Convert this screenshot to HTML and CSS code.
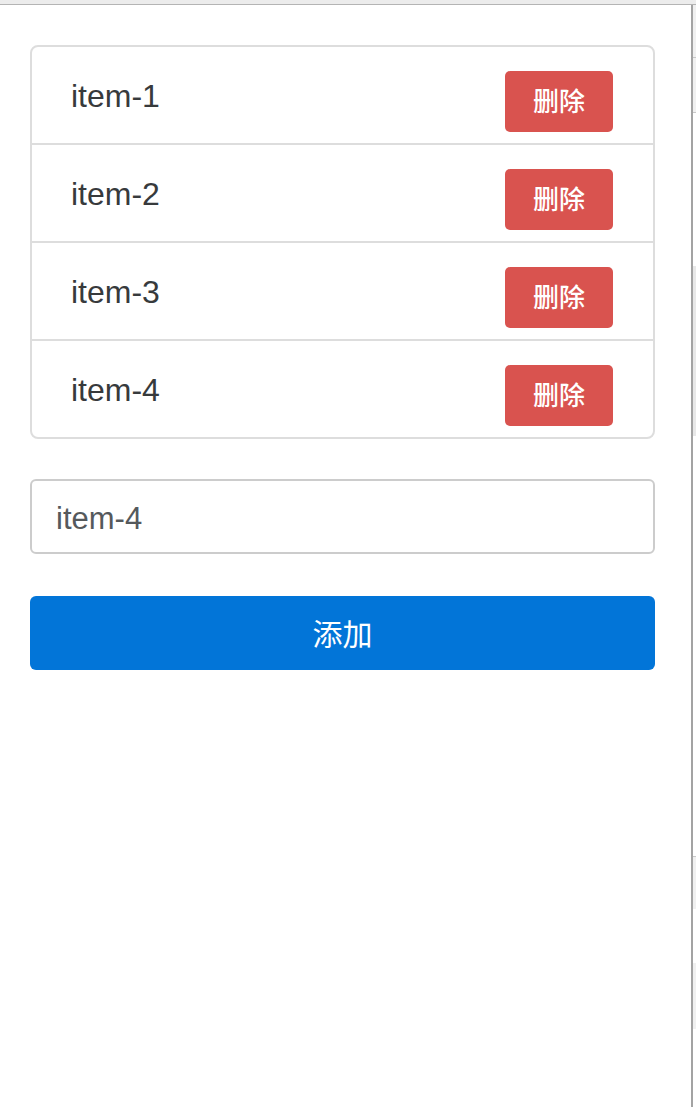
FILE: index.html
```html
<!DOCTYPE html>
<html lang="zh">
<head>
<meta charset="utf-8">
<title>List</title>
<link rel="stylesheet" href="styles.css">
</head>
<body>
<div class="chrome-top"></div>
<div class="frame">
  <main class="page">
    <ul class="list">
      <li class="row"><span class="label">item-1</span><button class="del">删除</button></li>
      <li class="row"><span class="label">item-2</span><button class="del">删除</button></li>
      <li class="row"><span class="label">item-3</span><button class="del">删除</button></li>
      <li class="row"><span class="label">item-4</span><button class="del">删除</button></li>
    </ul>
    <input class="field" type="text" value="item-4">
    <button class="add">添加</button>
  </main>
  <div class="gutter-line"></div>
  <div class="gutter">
    <div class="seg light s1"></div>
    <div class="seg mark"></div>
    <div class="seg light s2"></div>
    <div class="seg mark"></div>
    <div class="seg white s3"></div>
    <div class="seg light s4"></div>
    <div class="seg white s5"></div>
    <div class="seg mark"></div>
    <div class="seg light s6"></div>
    <div class="seg white s7"></div>
    <div class="seg light s8"></div>
    <div class="seg white s9"></div>
  </div>
</div>
</body>
</html>
```

FILE: styles.css
```css
html, body {
  margin: 0;
  padding: 0;
  background: #ffffff;
  font-family: "Liberation Sans", "Noto Sans CJK SC", sans-serif;
}

.chrome-top {
  height: 4px;
  background: #ececec;
  border-bottom: 1px solid #b4b4b4;
}

.frame {
  display: flex;
  height: 1102px;
}

.page {
  flex: 1;
  padding: 40px 36px 0 30px;
  display: flex;
  flex-direction: column;
}

.gutter-line {
  width: 2px;
  background: #a3a3a3;
}

.gutter {
  width: 3px;
  display: flex;
  flex-direction: column;
}

.seg.light { background: #f0f0f0; }
.seg.white { background: #ffffff; }
.seg.mark { height: 1px; background: #c8c8c8; }
.s1 { height: 52px; }
.s2 { height: 54px; }
.s3 { height: 153px; }
.s4 { height: 170px; background: #e8e8e8 !important; }
.s5 { height: 420px; }
.s6 { height: 52px; }
.s7 { height: 54px; }
.s8 { height: 66px; }
.s9 { flex: 1; }

.list {
  list-style: none;
  margin: 0;
  padding: 0;
  border: 2px solid #dddddd;
  border-radius: 8px;
}

.row {
  display: flex;
  justify-content: space-between;
  align-items: flex-start;
  height: 96px;
  padding: 0 40px 0 39px;
  border-bottom: 2px solid #dddddd;
}

.row:last-child {
  border-bottom: none;
}

.label {
  font-size: 32px;
  line-height: 36px;
  color: #373a3c;
  padding-top: 31px;
}

.del {
  margin-top: 24px;
  width: 108px;
  height: 61px;
  border: none;
  border-radius: 5px;
  background: #d9534f;
  color: #ffffff;
  font-family: "Liberation Sans", "Noto Sans CJK SC", sans-serif;
  font-size: 26px;
  font-weight: 500;
  padding: 0 0 5px 0;
}

.field {
  margin-top: 40px;
  height: 75px;
  box-sizing: border-box;
  border: 2px solid #cccccc;
  border-radius: 6px;
  padding: 4px 24px 0 24px;
  font-family: "Liberation Sans", "Noto Sans CJK SC", sans-serif;
  font-size: 31px;
  color: #55595c;
  outline: none;
}

.add {
  margin-top: 42px;
  height: 74px;
  border: none;
  border-radius: 6px;
  background: #0275d8;
  color: #ffffff;
  font-family: "Liberation Sans", "Noto Sans CJK SC", sans-serif;
  font-size: 30px;
  padding: 0 0 2px 0;
}
```
